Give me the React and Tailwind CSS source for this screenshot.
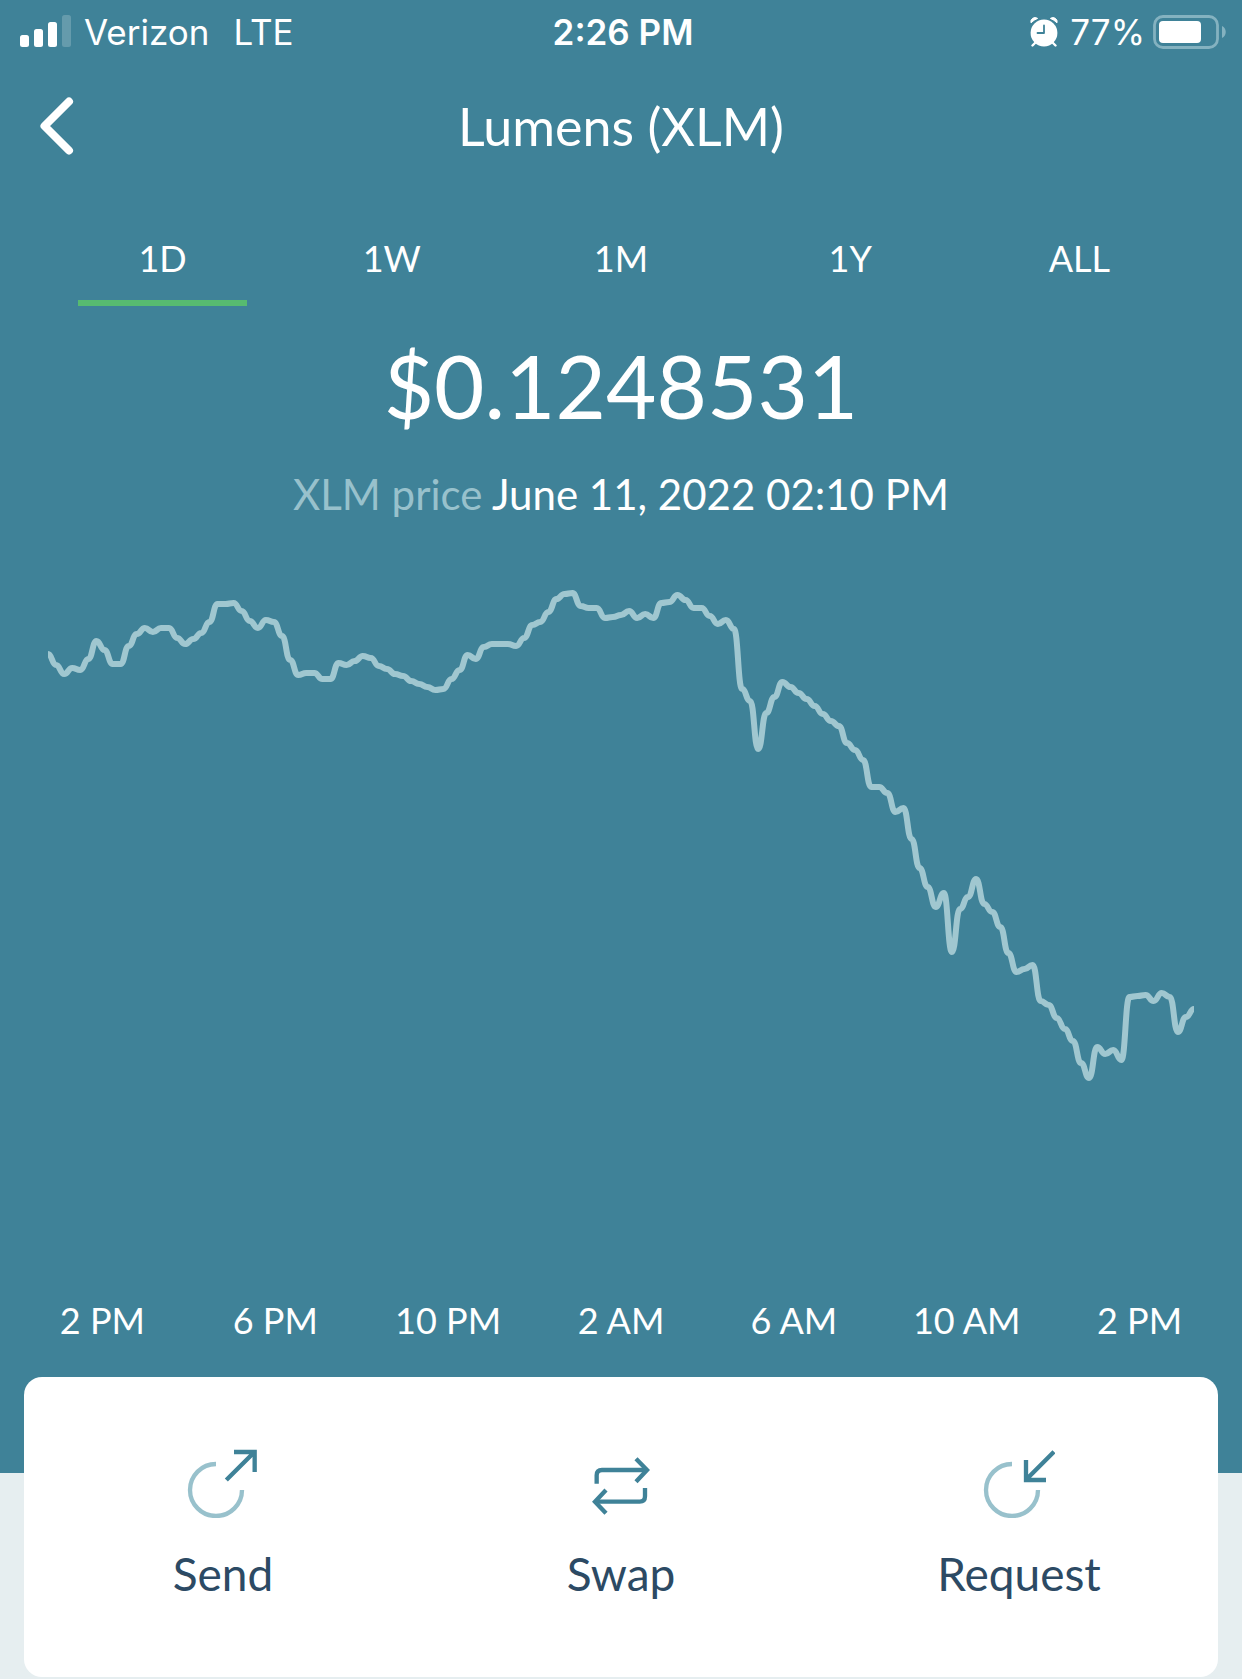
import React, { useState } from 'react';

const RANGES = ['1D', '1W', '1M', '1Y', 'ALL'];

const HOURS = ['2 PM', '6 PM', '10 PM', '2 AM', '6 AM', '10 AM', '2 PM'];

// one sample every ten minutes, as distance from the top of the chart
const SAMPLES = [
  74, 85, 94, 88, 90, 79, 61, 70, 84, 84, 66, 54, 48, 52, 48, 48, 58, 64, 59, 53,
  42, 24, 24, 23, 31, 41, 48, 40, 42, 56, 80, 95, 93, 93, 99, 99, 83, 85, 81, 76,
  78, 86, 89, 94, 96, 101, 104, 107, 110, 109, 99, 90, 75, 79, 67, 64, 64, 64, 66, 58,
  45, 42, 32, 19, 14, 13, 26, 28, 28, 38, 37, 35, 31, 38, 34, 38, 23, 22, 15, 20,
  28, 28, 36, 44, 40, 49, 109, 121, 169, 133, 117, 102, 107, 113, 119, 126, 134, 141, 146, 163,
  170, 180, 207, 207, 213, 232, 228, 259, 288, 307, 327, 313, 372, 329, 317, 299, 324, 332, 347, 373,
  392, 389, 385, 421, 425, 438, 449, 461, 483, 498, 467, 474, 470, 480, 417, 416, 415, 421, 413, 417,
  452, 437, 429
];

const CHART_WIDTH = 1146;

function linePath(samples) {
  const step = CHART_WIDTH / (samples.length - 1);
  const bend = step * 0.5;
  return samples
    .map((y, i) => {
      const x = i * step;
      if (i === 0) return `M${x} ${y}`;
      return `C${x - step + bend} ${samples[i - 1]} ${x - bend} ${y} ${x} ${y}`;
    })
    .join(' ');
}

function SignalIcon() {
  return (
    <svg width="52" height="34" viewBox="0 0 52 34" fill="white" aria-hidden="true">
      <rect x="0" y="20" width="9" height="12" rx="2.5" />
      <rect x="14" y="14" width="9" height="18" rx="2.5" />
      <rect x="28" y="7" width="9" height="25" rx="2.5" />
      <rect x="42" y="0" width="9" height="32" rx="2.5" opacity="0.2" />
    </svg>
  );
}

function AlarmIcon() {
  return (
    <svg width="28" height="30" viewBox="0 0 28 30" aria-hidden="true">
      <g fill="none" stroke="white" strokeWidth="2.4" strokeLinecap="round">
        <path d="M6 25L2.500 28.500M22 25L25.500 28.500" />
      </g>
      <path d="M1 5.800A4.200 4.200 0 0 1 7.600 1.400Q4 2.800 1 5.800Z" fill="white" stroke="white" />
      <path d="M27 5.800A4.200 4.200 0 0 0 20.400 1.400Q24 2.800 27 5.800Z" fill="white" stroke="white" />
      <circle cx="14" cy="16" r="13.400" fill="white" />
      <path
        d="M14 8.500V16H7.500"
        fill="none"
        stroke="#3f8298"
        strokeWidth="1.800"
        strokeLinecap="round"
        strokeLinejoin="round"
      />
    </svg>
  );
}

function BatteryIcon() {
  return (
    <svg width="73" height="34" viewBox="0 0 73 34" aria-hidden="true">
      <rect x="1.5" y="1.500" width="63" height="31" rx="8.500" fill="none" stroke="#84b2c0" strokeWidth="2.800" />
      <rect x="6" y="6" width="42" height="22" rx="4" fill="white" />
      <path d="M69 11C74 13 74 21 69 23Z" fill="#84b2c0" />
    </svg>
  );
}

function SendIcon() {
  return (
    <svg width="72" height="72" viewBox="0 0 216 216" fill="none" strokeWidth="13" aria-hidden="true">
      <path d="M87 54A78 78 0 1 0 165 132" stroke="#98c1cc" />
      <path d="M118 102L203 17M141 18H203V78" stroke="#3f8298" />
    </svg>
  );
}

function SwapIcon() {
  return (
    <svg width="72" height="72" viewBox="0 0 216 216" fill="none" stroke="#3f8298" strokeWidth="13" aria-hidden="true">
      <path d="M35 113V88Q35 72 51 72H184" />
      <path d="M153 38L186 72L153 107" />
      <path d="M180 126V151Q180 167 164 167H32" />
      <path d="M63 132L30 167L63 202" />
    </svg>
  );
}

function RequestIcon() {
  return (
    <svg width="72" height="72" viewBox="0 0 216 216" fill="none" strokeWidth="13" aria-hidden="true">
      <path d="M87 54A78 78 0 1 0 165 132" stroke="#98c1cc" />
      <path d="M213 17L129 101M129 42V102H189" stroke="#3f8298" />
    </svg>
  );
}

const ACTIONS = [
  { label: 'Send', icon: SendIcon },
  { label: 'Swap', icon: SwapIcon },
  { label: 'Request', icon: RequestIcon }
];

function StatusBar() {
  return (
    <div className="grid grid-cols-3 items-center h-16 pl-5 pr-4 font-['Inter',sans-serif] text-[35px] leading-10">
      <div className="flex items-center gap-3">
        <SignalIcon />
        <span>Verizon</span>
        <span className="ml-3">LTE</span>
      </div>
      <div className="text-center font-semibold">2:26 PM</div>
      <div className="flex items-center justify-end gap-2">
        <AlarmIcon />
        <span className="pl-1">77%</span>
        <BatteryIcon />
      </div>
    </div>
  );
}

export default function App() {
  const [range, setRange] = useState('1D');

  return (
    <main className="min-h-screen bg-[#e6eef0] font-['Lato',sans-serif]">
      <section className="bg-[#3f8298] text-white pb-24">
        <StatusBar />

        <header className="grid grid-cols-[80px_1fr_80px] items-center h-31">
          <button type="button" aria-label="Back" className="pl-10">
            <svg width="34" height="58" viewBox="0 0 34 58" fill="none" aria-hidden="true">
              <path
                d="M29 4.500L4.500 29L29 53.500"
                stroke="white"
                strokeWidth="8"
                strokeLinecap="round"
                strokeLinejoin="round"
              />
            </svg>
          </button>
          <h1 className="text-center text-[52px] leading-15">Lumens (XLM)</h1>
        </header>

        <nav className="grid grid-cols-5 px-12 pt-11">
          {RANGES.map((item) => (
            <button
              key={item}
              type="button"
              onClick={() => setRange(item)}
              className={`mx-[30px] h-[74px] pb-4 border-b-6 text-[36px] leading-10 ${
                range === item ? 'border-[#57bb70]' : 'border-transparent'
              }`}
            >
              {item}
            </button>
          ))}
        </nav>

        <div className="pt-6 text-center">
          <p className="text-[87px] leading-28">$0.1248531</p>
          <p className="pt-7 text-[42px] leading-12">
            <span className="text-[#98c1cc]">XLM price</span> June 11, 2022 02:10 PM
          </p>
        </div>

        <div className="px-12 pt-[62px]">
          <svg viewBox="0 0 1146 700" className="block w-full" role="img" aria-label="XLM price chart">
            <path d={linePath(SAMPLES)} fill="none" stroke="#a0c7d0" strokeWidth="6" />
          </svg>
        </div>

        <div className="grid grid-cols-7 px-4 pt-5 pb-[37px] text-center text-[36px] leading-10">
          {HOURS.map((hour, i) => (
            <span key={i}>{hour}</span>
          ))}
        </div>
      </section>

      <section className="relative mx-6 -mt-24 h-[300px] rounded-[18px] bg-white grid grid-cols-3 text-[#2c4a64]">
        {ACTIONS.map(({ label, icon: Icon }) => (
          <button key={label} type="button" className="flex flex-col items-center pt-[69px] gap-7">
            <Icon />
            <span className="text-[46px] leading-14">{label}</span>
          </button>
        ))}
      </section>
    </main>
  );
}
